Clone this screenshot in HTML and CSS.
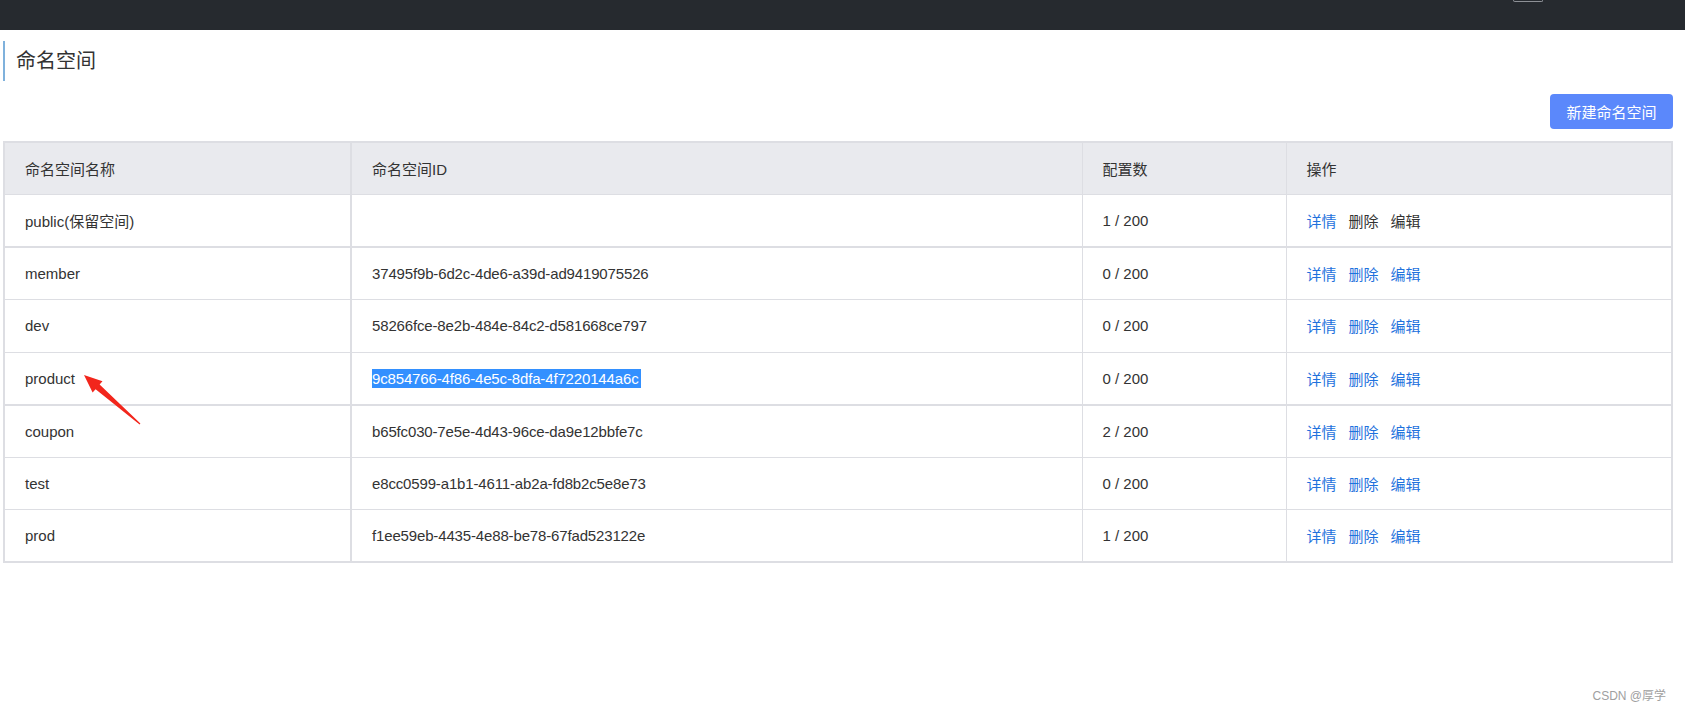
FILE: index.html
```html
<!DOCTYPE html>
<html lang="zh-CN">
<head>
<meta charset="utf-8">
<title>命名空间</title>
<link rel="stylesheet" href="styles.css">
</head>
<body>
<div class="topbar"><div class="topbar-tab"></div></div>
<div class="page">
  <div class="title">命名空间</div>
  <div class="toolbar"><button class="btn-primary">新建命名空间</button></div>
  <table class="ns-table">
    <colgroup><col class="c1"><col class="c2"><col class="c3"><col class="c4"></colgroup>
    <thead>
      <tr><th>命名空间名称</th><th>命名空间ID</th><th>配置数</th><th>操作</th></tr>
    </thead>
    <tbody>
      <tr class="thick"><td>public(保留空间)</td><td></td><td>1 / 200</td><td><span class="link">详情</span><span class="link muted">删除</span><span class="link muted">编辑</span></td></tr>
      <tr><td>member</td><td class="id">37495f9b-6d2c-4de6-a39d-ad9419075526</td><td>0 / 200</td><td><span class="link">详情</span><span class="link">删除</span><span class="link">编辑</span></td></tr>
      <tr><td>dev</td><td class="id">58266fce-8e2b-484e-84c2-d581668ce797</td><td>0 / 200</td><td><span class="link">详情</span><span class="link">删除</span><span class="link">编辑</span></td></tr>
      <tr class="thick"><td>product</td><td class="id"><span class="selected">9c854766-4f86-4e5c-8dfa-4f7220144a6c</span></td><td>0 / 200</td><td><span class="link">详情</span><span class="link">删除</span><span class="link">编辑</span></td></tr>
      <tr><td>coupon</td><td class="id">b65fc030-7e5e-4d43-96ce-da9e12bbfe7c</td><td>2 / 200</td><td><span class="link">详情</span><span class="link">删除</span><span class="link">编辑</span></td></tr>
      <tr><td>test</td><td class="id">e8cc0599-a1b1-4611-ab2a-fd8b2c5e8e73</td><td>0 / 200</td><td><span class="link">详情</span><span class="link">删除</span><span class="link">编辑</span></td></tr>
      <tr><td>prod</td><td class="id">f1ee59eb-4435-4e88-be78-67fad523122e</td><td>1 / 200</td><td><span class="link">详情</span><span class="link">删除</span><span class="link">编辑</span></td></tr>
    </tbody>
  </table>
</div>
<svg class="arrow" width="200" height="460" viewBox="0 0 200 460" xmlns="http://www.w3.org/2000/svg">
  <polygon points="84,375 102.5,381.2 99.6,384.6 140.4,423.5 139.6,424.5 95.6,389.2 92.6,392.4" fill="#f2261c"/>
</svg>
<div class="watermark">CSDN @厚学</div>
</body>
</html>
```

FILE: styles.css
```css
html, body {
  margin: 0;
  padding: 0;
  background: #ffffff;
}
body {
  position: relative;
  width: 1685px;
  height: 714px;
  overflow: hidden;
  font-family: "Liberation Sans", "Noto Sans CJK SC", sans-serif;
  font-size: 15px;
  color: #333333;
}
.topbar {
  height: 30px;
  background: #262a2f;
  display: flex;
  justify-content: flex-end;
  align-items: flex-start;
}
.topbar-tab {
  width: 28px;
  height: 1px;
  margin-right: 142px;
  border: 1px solid #8d9096;
  border-top: none;
  border-radius: 0 0 3px 3px;
}
.page {
  padding: 11px 12px 0 3px;
}
.title {
  height: 40px;
  line-height: 40px;
  border-left: 2px solid #7fb1dc;
  padding-left: 11px;
  font-size: 20px;
  color: #333333;
}
.toolbar {
  display: flex;
  justify-content: flex-end;
  margin-top: 13px;
}
.btn-primary {
  width: 123px;
  height: 35px;
  border: none;
  border-radius: 4px;
  background: #5b88fb;
  color: #ffffff;
  font-family: "Liberation Sans", "Noto Sans CJK SC", sans-serif;
  font-size: 15px;
  padding: 0;
}
.ns-table {
  margin-top: 12px;
  width: 1670px;
  border-collapse: collapse;
  table-layout: fixed;
  border: 2px solid #dddee3;
}
.c1 { width: 347px; }
.c2 { width: 731px; }
.c3 { width: 204px; }
.ns-table th,
.ns-table td {
  height: 52.5px;
  padding: 0 20px;
  text-align: left;
  vertical-align: middle;
  border: 1px solid #dddee3;
  font-weight: normal;
  white-space: nowrap;
  box-sizing: border-box;
}
.ns-table td.id {
  letter-spacing: -0.15px;
}
.ns-table th:first-child,
.ns-table td:first-child {
  border-right: 2px solid #dddee3;
}
.ns-table th {
  background: #e9eaee;
  color: #333333;
}
.ns-table tr.thick td {
  border-bottom: 2px solid #dddee3;
}
.link {
  color: #1f72dd;
  margin-right: 12px;
}
.link.muted {
  color: #333333;
}
.selected {
  background: #3390ff;
  color: #ffffff;
  padding-right: 3px;
  line-height: 19px;
  display: inline-block;
}
.arrow {
  position: absolute;
  left: 0;
  top: 0;
}
.watermark {
  position: absolute;
  right: 19px;
  bottom: 11px;
  font-size: 12px;
  color: #a0a0a0;
}
```
